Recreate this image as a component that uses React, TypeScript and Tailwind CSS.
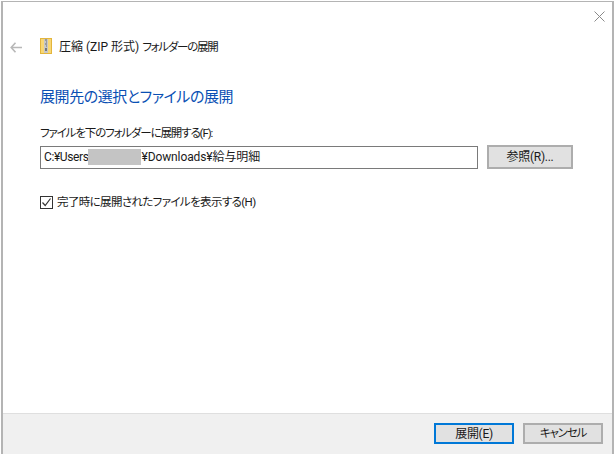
const font = { fontFamily: 'Roboto, "Noto Sans CJK JP", "Liberation Sans", sans-serif' };

function Zipper() {
  return (
    <svg width="12" height="16" viewBox="0 0 12 16" className="mb-[2px] block">
      <rect x="0.5" y="0.5" width="11" height="15" fill="#f8d775" stroke="#e3b53c" />
      <rect x="4" y="1" width="4" height="14" fill="#c8c8c8" />
      <path d="M5 2h2M6 4h1M5 6h2M6 8h1" stroke="#6e6e6e" strokeWidth="1" />
      <rect x="5" y="10" width="2" height="3" fill="#777" />
    </svg>
  );
}

export default function App() {
  return (
    <div className='flex h-[454px] w-[615px] flex-col bg-white pl-px pt-px text-[#1a1a1a] [font-feature-settings:"palt"]' style={font}>
      <div className="flex h-[453px] w-[613px] flex-col border-2 border-b-0 border-[#b4b4b4] border-t-[1px] bg-white">
        <div className="flex h-[17px] justify-end pr-[7px] pt-[9px]">
          <svg width="11" height="11" viewBox="0 0 11 11" className="block">
            <path d="M0.5 0.5l10 10M10.5 0.5l-10 10" stroke="#8a8a8a" strokeWidth="1" fill="none" />
          </svg>
        </div>

        <div className="mt-[18px] flex h-[20px] items-center">
          <svg width="12" height="11" viewBox="0 0 12 11" className="ml-[7px] block">
            <path d="M5.5 0.7L1.2 5.5L5.5 10.3M1.6 5.5H12" stroke="#b8b8b8" strokeWidth="1.6" fill="none" />
          </svg>
          <div className="ml-[18px]">
            <Zipper />
          </div>
          <span className="ml-[7px] text-[12px] leading-[20px]">
            圧縮 (ZIP 形式) <span className="text-[11.5px] tracking-[-1.25px]">フォルダーの展開</span>
          </span>
        </div>

        <h1 className="ml-[37px] mt-[29px] text-[15px] font-normal leading-[22px] tracking-[-0.43px] text-[#0a50b4]">
          展開先の選択とファイルの展開
        </h1>

        <label className="ml-[37px] mt-[16px] block text-[11.5px] leading-[18px] tracking-[-1.14px]">
          ファイルを下のフォルダーに展開する(F):
        </label>

        <div className="ml-[37px] mt-[4px] flex items-start">
          <div className="flex h-[23px] w-[438px] items-center border border-[#7a7a7a] pb-[2px] pl-[3px] text-[12px]">
            <span className="tracking-[-0.4px]">C:¥Users</span>
            <span className="h-[16px] w-[53px] bg-[#c4c4c4]" />
            <span className="tracking-[-0.1px]">¥Downloads¥給与明細</span>
          </div>
          <button className="ml-[9px] mt-[-1px] flex h-[24px] w-[86px] items-center justify-center border-2 border-[#adadad] bg-[#e1e1e1] text-[12px] tracking-[-0.3px]">
            参照(R)...
          </button>
        </div>

        <div className="ml-[37px] mt-[24px] flex items-center">
          <span className="flex h-[13px] w-[13px] items-center justify-center border border-[#333] bg-white">
            <svg width="11" height="11" viewBox="0 0 11 11" className="block">
              <path d="M1.5 5.5L4.2 8.5L9.5 1.5" stroke="#333" strokeWidth="1.2" fill="none" />
            </svg>
          </span>
          <span className="ml-[4px] text-[11.5px] leading-[18px] tracking-[-0.62px]">完了時に展開されたファイルを表示する(H)</span>
        </div>

        <div className="mt-auto flex h-[41px] justify-end border-t border-[#dfdfdf] bg-[#f0f0f0] pr-[9px] pt-[9px]">
          <button className="flex h-[21px] w-[80px] items-center justify-center border-2 border-[#0078d7] bg-[#e1e1e1] text-[12px] tracking-[-0.3px]">
            展開(E)
          </button>
          <button className="ml-[9px] flex h-[21px] w-[80px] items-center justify-center border-2 border-[#adadad] bg-[#e1e1e1] text-[11.5px] tracking-[-1.2px]">
            キャンセル
          </button>
        </div>
      </div>
    </div>
  );
}
